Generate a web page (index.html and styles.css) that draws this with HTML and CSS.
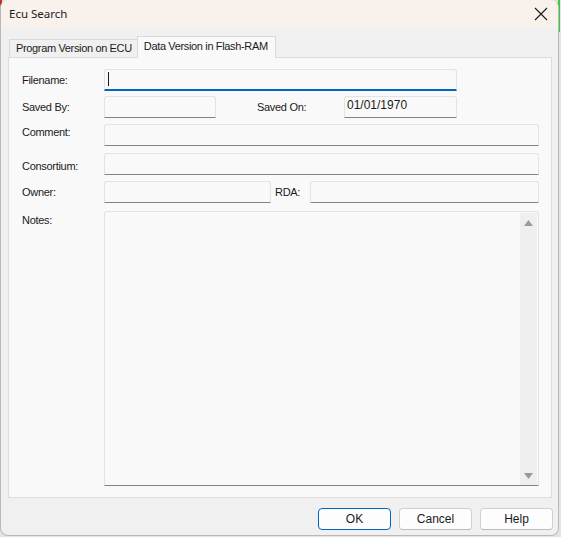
FILE: index.html
```html
<!DOCTYPE html>
<html>
<head>
<meta charset="utf-8">
<title>Ecu Search</title>
<link rel="stylesheet" href="styles.css">
</head>
<body>
<div class="window">
  <div class="titlebar">
    <span class="title">Ecu Search</span>
    <svg class="close" width="14" height="14" viewBox="0 0 14 14"><path d="M1 1L13 13M13 1L1 13" stroke="#1a1a1a" stroke-width="1.1" fill="none"/></svg>
  </div>
  <div class="client">
    <div class="tabs">
      <div class="tab">Program Version on ECU</div>
      <div class="tab active">Data Version in Flash-RAM</div>
    </div>
    <div class="panel">
      <div class="row r-filename">
        <label class="lbl">Filename:</label>
        <div class="field focus w-filename"><span class="caret"></span></div>
      </div>
      <div class="row r-saved">
        <label class="lbl">Saved By:</label>
        <div class="field w-savedby"></div>
        <label class="lbl2 l-savedon">Saved On:</label>
        <div class="field w-savedon"><span class="val">01/01/1970</span></div>
      </div>
      <div class="row r-comment">
        <label class="lbl up">Comment:</label>
        <div class="field w-full"></div>
      </div>
      <div class="row r-cons">
        <label class="lbl down">Consortium:</label>
        <div class="field w-full"></div>
      </div>
      <div class="row r-owner">
        <label class="lbl">Owner:</label>
        <div class="field w-owner"></div>
        <label class="lbl2 l-rda">RDA:</label>
        <div class="field w-rda"></div>
      </div>
      <div class="row r-notes">
        <label class="lbl top">Notes:</label>
        <div class="notes">
          <div class="notes-area"></div>
          <div class="scroll">
            <svg width="9" height="6" viewBox="0 0 9 6"><path d="M4.5 0L9 6H0Z" fill="#9a9a9a"/></svg>
            <svg width="9" height="6" viewBox="0 0 9 6"><path d="M0 0H9L4.5 6Z" fill="#9a9a9a"/></svg>
          </div>
        </div>
      </div>
    </div>
    <div class="buttons">
      <button class="btn default">OK</button>
      <button class="btn">Cancel</button>
      <button class="btn">Help</button>
    </div>
  </div>
</div>
</body>
</html>
```
FILE: styles.css
```css
html, body {
  margin: 0;
  padding: 0;
}
body {
  width: 561px;
  height: 537px;
  background: #e4e4e4;
  font-family: "Liberation Sans", Arial, sans-serif;
  font-size: 12px;
  color: #1a1a1a;
  overflow: hidden;
  position: relative;
}
body::before {
  content: "";
  position: absolute;
  left: 0;
  top: 0;
  width: 2px;
  height: 60px;
  background: #c42b1c;
}
body::after {
  content: "";
  position: absolute;
  right: 1px;
  top: 0;
  width: 2px;
  height: 32px;
  background: #3cc83c;
}
.window {
  position: relative;
  z-index: 1;
  width: 557px;
  height: 535px;
  background: #f0f0f0;
  border: 1px solid #b9b9b9;
  border-top: none;
  border-radius: 8px;
  overflow: hidden;
  display: flex;
  flex-direction: column;
}
.titlebar {
  height: 29px;
  flex: none;
  background: #f9f1ec;
  display: flex;
  align-items: center;
  justify-content: space-between;
  padding: 0 10px 0 8px;
}
.title {
  font-family: "Noto Sans", "Liberation Sans", sans-serif;
  font-size: 11.5px;
  color: #1a1a1a;
  margin-top: -2px;
}
.close {
  margin-top: -2px;
}
.client {
  flex: 1;
  display: flex;
  flex-direction: column;
  padding: 7px 0 0 7px;
}
.tabs {
  display: flex;
  align-items: flex-end;
  height: 21px;
  padding-left: 1px;
}
.tab {
  height: 17px;
  line-height: 17px;
  padding: 0 5px 0 6px;
  background: #f0f0f0;
  border: 1px solid #d9d9d9;
  border-bottom: none;
  border-right: none;
  font-size: 11px;
  letter-spacing: -0.35px;
  white-space: nowrap;
}
.tab.active {
  line-height: 18px;
  background: #f9f9f9;
  border-right: 1px solid #d9d9d9;
  padding: 0 7px 0 6px;
  position: relative;
  z-index: 2;
  margin-bottom: -1px;
  height: 21px;
}
.panel {
  width: 542px;
  height: 428px;
  background: #f9f9f9;
  border: 1px solid #dcdcdc;
  padding: 11px 0 0 0;
  box-sizing: content-box;
  display: flex;
  flex-direction: column;
  font-size: 11px;
  letter-spacing: -0.3px;
}
.row {
  display: flex;
  align-items: center;
  padding-left: 13px;
}
.lbl {
  width: 82px;
  flex: none;
}
.lbl.up { margin-top: -6px; }
.lbl.down { margin-top: 4px; }
.lbl.top { align-self: flex-start; margin-top: 3px; }
.field {
  height: 20px;
  background: #f9f9f9;
  border: 1px solid #e3e3e3;
  border-bottom: 1px solid #838383;
  border-radius: 3px 3px 0 0;
  box-sizing: content-box;
  position: relative;
  display: flex;
  align-items: center;
}
.field.focus {
  border-bottom: 2px solid #0067c0;
  height: 19px;
}
.caret {
  display: block;
  width: 1px;
  height: 14px;
  background: #1a1a1a;
  margin-left: 3px;
  margin-top: -1px;
}
.val {
  margin-left: 2px;
  margin-top: -5px;
  font-size: 12px;
  letter-spacing: 0;
}
.r-saved { margin-top: 5px; }
.r-comment { margin-top: 6px; }
.r-cons { margin-top: 7px; }
.r-owner { margin-top: 6px; }
.r-notes { margin-top: 8px; }
.w-filename { width: 351px; }
.w-savedby { width: 110px; }
.w-savedon { width: 111px; }
.w-full { width: 433px; }
.w-owner { width: 165px; }
.w-rda { width: 227px; }
.lbl2 { flex: none; }
.l-savedon { margin-left: 41px; width: 87px; }
.l-rda { margin-left: 4px; width: 35px; }
.notes {
  width: 433px;
  height: 273px;
  border: 1px solid #e3e3e3;
  border-bottom: 1px solid #838383;
  border-radius: 3px 3px 0 0;
  display: flex;
}
.notes-area { flex: 1; }
.scroll {
  width: 17px;
  margin: 1px 1px 0 0;
  background: #efefef;
  display: flex;
  flex-direction: column;
  justify-content: space-between;
  align-items: center;
  padding: 7px 0 6px;
}
.buttons {
  display: flex;
  justify-content: flex-end;
  gap: 8px;
  padding: 10px 5px 0 0;
}
.btn {
  width: 73px;
  height: 22px;
  background: #fdfdfd;
  border: 1px solid #d0d0d0;
  border-bottom-color: #bcbcbc;
  border-radius: 4px;
  font-family: "Liberation Sans", Arial, sans-serif;
  font-size: 12px;
  color: #1a1a1a;
  padding: 0;
}
.btn.default {
  border: 1px solid #0067c0;
}
```
